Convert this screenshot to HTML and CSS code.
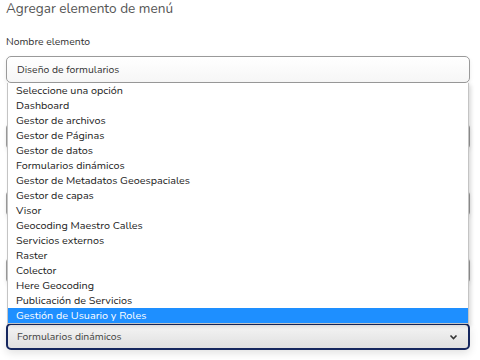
FILE: index.html
```html
<!DOCTYPE html>
<html lang="es">
<head>
    <meta charset="UTF-8">
    <meta name="viewport" content="width=device-width, initial-scale=1.0">
    <title>Agregar elemento de menú</title>
    <link rel="stylesheet" href="styles.css">
</head>
<body>
    <div class="form">
        <h1>Agregar elemento de menú</h1>

        <div class="field">
            <label>Nombre elemento</label>
            <div class="input">Diseño de formularios</div>
        </div>
        <div class="field">
            <label></label>
            <div class="input"></div>
        </div>
        <div class="field">
            <label></label>
            <div class="input"></div>
        </div>
        <div class="field">
            <label></label>
            <div class="input"></div>
        </div>
        <div class="field last">
            <label></label>
            <div class="input select focused">
                <span>Formularios dinámicos</span>
                <svg class="chevron" width="9" height="6" viewBox="0 0 9 6">
                    <polyline points="1.5,1.5 4.5,4.5 7.5,1.5" fill="none" stroke="#333" stroke-width="1.6"/>
                </svg>
            </div>
        </div>

        <ul class="options">
            <li>Seleccione una opción</li>
            <li>Dashboard</li>
            <li>Gestor de archivos</li>
            <li>Gestor de Páginas</li>
            <li>Gestor de datos</li>
            <li>Formularios dinámicos</li>
            <li>Gestor de Metadatos Geoespaciales</li>
            <li>Gestor de capas</li>
            <li>Visor</li>
            <li>Geocoding Maestro Calles</li>
            <li>Servicios externos</li>
            <li>Raster</li>
            <li>Colector</li>
            <li>Here Geocoding</li>
            <li>Publicación de Servicios</li>
            <li class="selected">Gestión de Usuario y Roles</li>
        </ul>
    </div>
</body>
</html>
```

FILE: styles.css
```css
body {
    margin: 0;
    background-color: #ffffff;
    font-family: 'Nunito', 'Lato', sans-serif;
    color: #222;
}
.form {
    position: relative;
    padding: 0 10px 0 6px;
}
h1 {
    margin: 0 0 19px 0;
    padding-top: 1px;
    font-size: 13.6px;
    line-height: 15px;
    font-weight: 400;
    color: #555;
}
.field {
    margin-bottom: 19px;
}
.field.last {
    margin-top: -1px;
}
.field label {
    display: block;
    height: 14px;
    font-size: 10.4px;
    line-height: 14px;
    margin-bottom: 7px;
    color: #333;
}
.input {
    box-sizing: border-box;
    height: 27px;
    padding: 0 10px;
    display: flex;
    align-items: center;
    font-size: 10.4px;
    color: #333;
    border: 1px solid #9a9a9a;
    border-radius: 5px;
    background: linear-gradient(#ffffff, #f6f6f6);
    box-shadow: 0 2px 4px rgba(0, 0, 0, 0.08);
}
.select {
    justify-content: space-between;
    color: #444;
    background: linear-gradient(#f4f4f4, #e0e0e0);
}
.focused {
    border: 2px solid #16275e;
    padding: 0 9px;
    box-shadow: 0 3px 8px rgba(0, 0, 0, 0.12);
}
.chevron {
    margin-right: 1px;
}
.options {
    position: absolute;
    top: 83px;
    left: 7px;
    width: 462px;
    margin: 0;
    padding: 0;
    list-style: none;
    box-sizing: border-box;
    background-color: #ffffff;
    border: 1px solid #c4c4c4;
    border-top: none;
    box-shadow: 2px 2px 4px rgba(0, 0, 0, 0.15);
}
.options li {
    height: 15px;
    line-height: 15px;
    padding-left: 8px;
    font-size: 10.8px;
    color: #222;
}
.options li.selected {
    background-color: #1e8fff;
    color: #ffffff;
}
```
